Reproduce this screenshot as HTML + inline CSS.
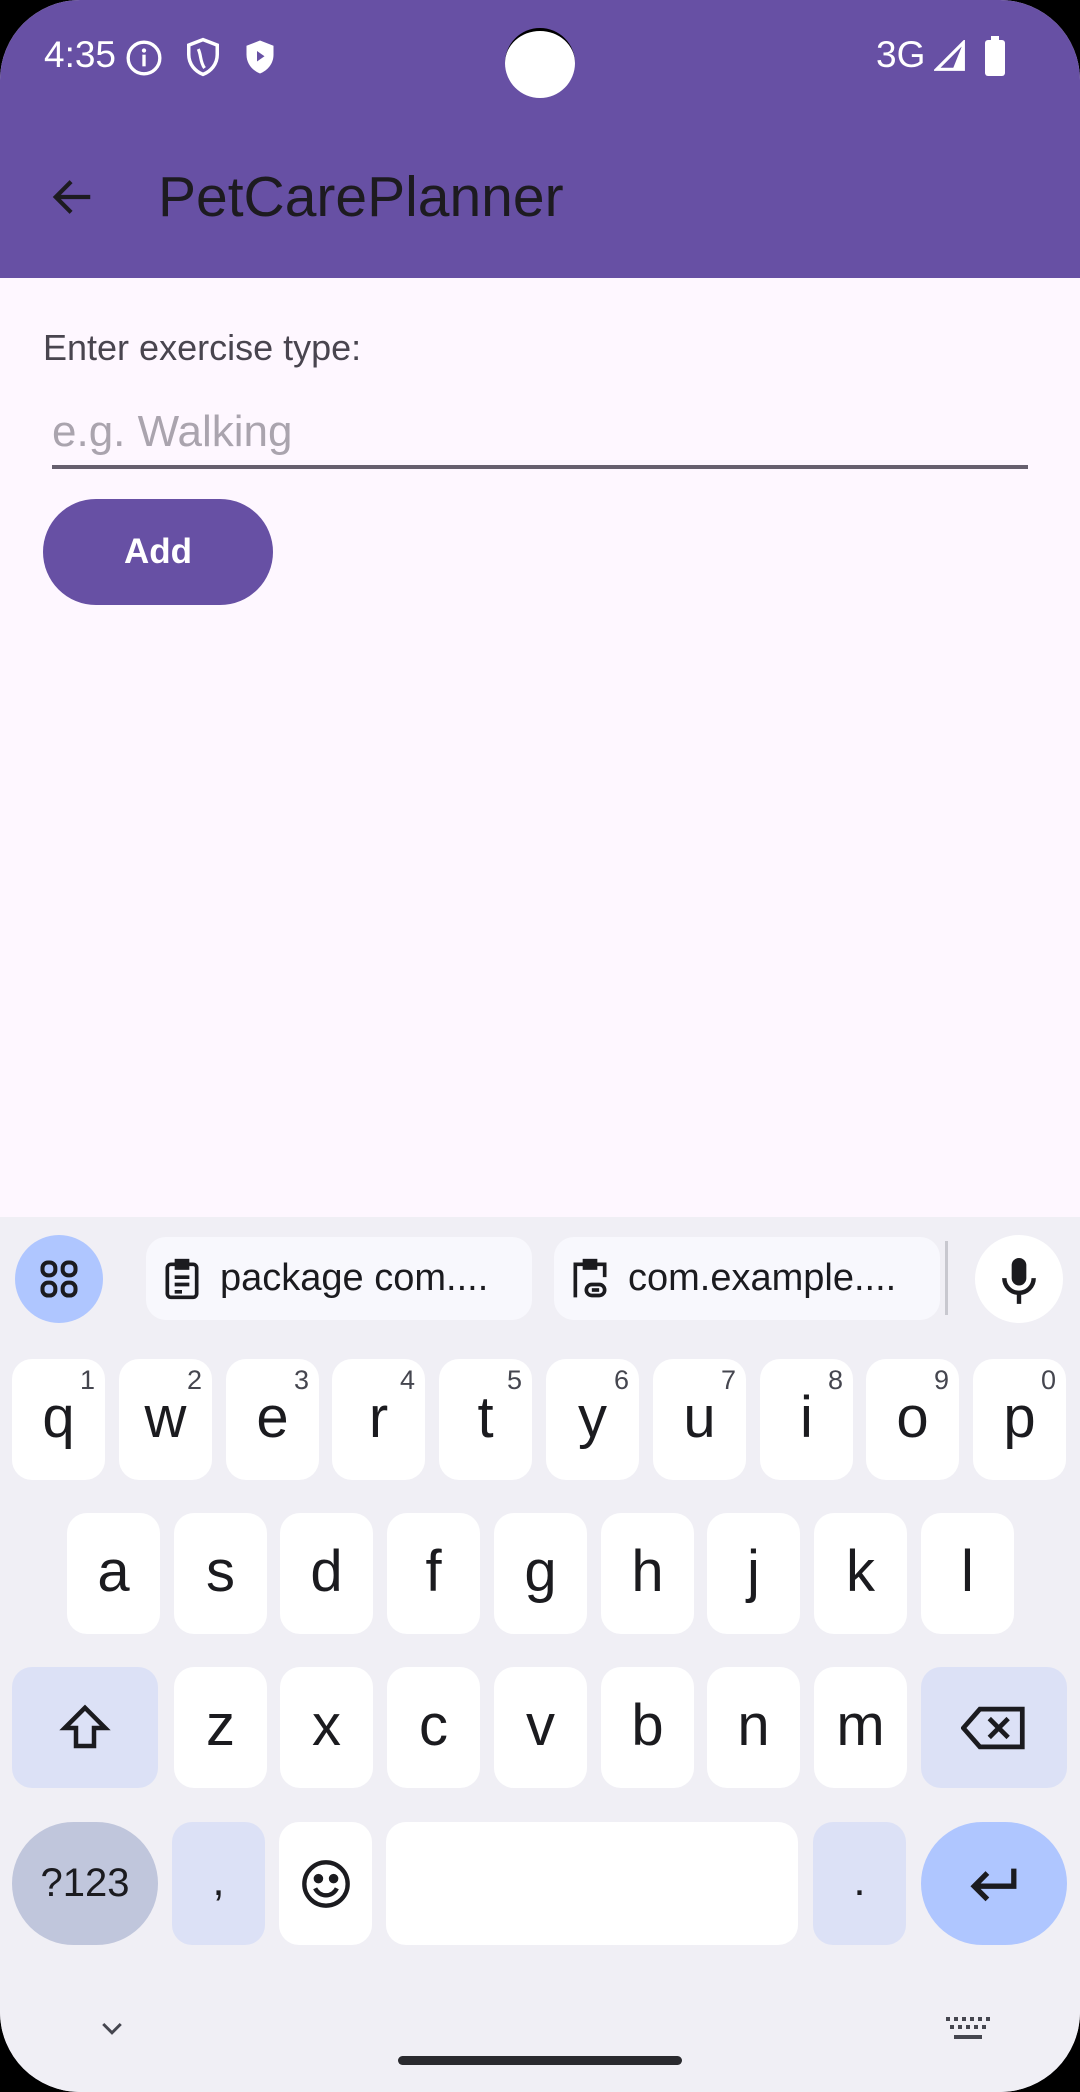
<!DOCTYPE html>
<html><head><meta charset="utf-8"><style>
*{margin:0;padding:0;box-sizing:border-box}
body{width:1080px;height:2092px;overflow:hidden;background:#000;font-family:"Liberation Sans",sans-serif}
#ph{position:absolute;left:0;top:0;width:1080px;height:2092px;background:#FEF7FF;border-radius:80px;overflow:hidden}
.a{position:absolute}
.k{position:absolute;width:93px;height:121px;background:#fff;border-radius:20px;color:#1b1b1f;font-size:58px;text-align:center;line-height:118px}
.k sup{position:absolute;right:10px;top:6px;font-size:27px;line-height:30px;color:#45464f}
.m{background:#DCE1F6}
</style></head><body><div id="ph">
<div class="a" style="left:0;top:0;width:1080px;height:278px;background:#6750A4"></div>
<div class="a" style="left:44px;top:34px;font-size:37px;color:#fff">4:35</div>
<svg class="a" style="left:124px;top:38px" width="40" height="40" viewBox="0 0 24 24"><circle cx="12" cy="12" r="9.5" fill="none" stroke="#fff" stroke-width="2"/><rect x="11" y="10" width="2" height="7" fill="#fff"/><circle cx="12" cy="7.5" r="1.3" fill="#fff"/></svg>
<svg class="a" style="left:184px;top:36px" width="38" height="42" viewBox="0 0 24 26"><path d="M12 2L3 5.5v6c0 6 4 10.5 9 12.5 5-2 9-6.5 9-12.5v-6z" fill="none" stroke="#fff" stroke-width="2.2"/><path d="M9 8c2 4 1 8 4 12" fill="none" stroke="#fff" stroke-width="2"/></svg>
<svg class="a" style="left:242px;top:36px" width="36" height="42" viewBox="0 0 24 26"><path d="M12 2L3 5.5v6c0 6 4 10.5 9 12.5 5-2 9-6.5 9-12.5v-6z" fill="#fff"/><path d="M10 9v7l5-3.5z" fill="#6750A4"/></svg>
<div class="a" style="left:505px;top:28px;width:70px;height:70px;border-radius:50%;background:#fff;border-top:3px solid #000"></div>
<div class="a" style="left:876px;top:34px;font-size:37px;color:#fff">3G</div>
<svg class="a" style="left:934px;top:40px" width="32" height="32" viewBox="0 0 24 24"><path d="M22 2L2 22h20z" fill="none" stroke="#fff" stroke-width="2.4"/><path d="M22 2v20h-8z" fill="#fff"/></svg>
<svg class="a" style="left:984px;top:36px" width="22" height="40" viewBox="0 0 11 20"><rect x="3.5" y="0" width="4" height="2" fill="#fff"/><rect x="0.5" y="2" width="10" height="18" rx="1.5" fill="#fff"/></svg>
<svg class="a" style="left:50px;top:174px" width="46" height="46" viewBox="0 0 24 24"><path d="M21 12H4M11 4l-8 8 8 8" fill="none" stroke="#1d1b20" stroke-width="2.2"/></svg>
<div class="a" style="left:158px;top:164px;font-size:57px;color:#1d1b20">PetCarePlanner</div>
<div class="a" style="left:43px;top:327px;font-size:36px;color:#49454f">Enter exercise type:</div>
<div class="a" style="left:52px;top:407px;font-size:44px;color:#aaa4ae">e.g. Walking</div>
<div class="a" style="left:52px;top:465px;width:976px;height:4px;background:#665f6e"></div>
<div class="a" style="left:43px;top:499px;width:230px;height:106px;border-radius:53px;background:#6750A4;color:#fff;font-size:35px;font-weight:bold;text-align:center;line-height:106px">Add</div>
<div class="a" style="left:0;top:1217px;width:1080px;height:875px;background:#F0EFF5"></div>
<div class="a" style="left:15px;top:1235px;width:88px;height:88px;border-radius:50%;background:#AFC6FF"></div>
<svg class="a" style="left:37px;top:1257px" width="44" height="44" viewBox="0 0 24 24" fill="none" stroke="#1b1b1f" stroke-width="2.2"><rect x="3" y="3" width="7" height="7" rx="3"/><rect x="14" y="3" width="7" height="7" rx="3"/><rect x="3" y="14" width="7" height="7" rx="3"/><rect x="14" y="14" width="7" height="7" rx="3"/></svg>
<div class="a" style="left:146px;top:1237px;width:386px;height:83px;border-radius:20px;background:#F8F8FD"></div>
<svg class="a" style="left:160px;top:1256px" width="44" height="46" viewBox="0 0 24 24" fill="none" stroke="#1b1b1f" stroke-width="2"><rect x="4" y="4" width="16" height="18" rx="2"/><rect x="9" y="2" width="6" height="4" fill="#1b1b1f"/><path d="M8 11h8M8 15h8M8 19h4"/></svg>
<div class="a" style="left:220px;top:1257px;font-size:38px;color:#1b1b1f">package com....</div>
<div class="a" style="left:554px;top:1237px;width:386px;height:83px;border-radius:20px;background:#F8F8FD"></div>
<svg class="a" style="left:568px;top:1256px" width="44" height="46" viewBox="0 0 24 24" fill="none" stroke="#1b1b1f" stroke-width="2"><path d="M4 22V4h16v7"/><rect x="9" y="2" width="6" height="4" fill="#1b1b1f"/><rect x="10" y="15" width="10" height="6" rx="3"/><path d="M13 18h4"/></svg>
<div class="a" style="left:628px;top:1257px;font-size:38px;color:#1b1b1f">com.example....</div>
<div class="a" style="left:945px;top:1241px;width:3px;height:74px;background:#c8c8cf"></div>
<div class="a" style="left:975px;top:1235px;width:88px;height:88px;border-radius:50%;background:#fff"></div>
<svg class="a" style="left:997px;top:1255px" width="44" height="50" viewBox="0 0 24 26"><rect x="8" y="1" width="8" height="15" rx="4" fill="#1b1b1f"/><path d="M4 12a8 8 0 0 0 16 0M12 20v6" fill="none" stroke="#1b1b1f" stroke-width="2.4"/></svg>

<div class="k" style="left:12px;top:1359px">q<sup>1</sup></div>
<div class="k" style="left:119px;top:1359px">w<sup>2</sup></div>
<div class="k" style="left:226px;top:1359px">e<sup>3</sup></div>
<div class="k" style="left:332px;top:1359px">r<sup>4</sup></div>
<div class="k" style="left:439px;top:1359px">t<sup>5</sup></div>
<div class="k" style="left:546px;top:1359px">y<sup>6</sup></div>
<div class="k" style="left:653px;top:1359px">u<sup>7</sup></div>
<div class="k" style="left:760px;top:1359px">i<sup>8</sup></div>
<div class="k" style="left:866px;top:1359px">o<sup>9</sup></div>
<div class="k" style="left:973px;top:1359px">p<sup>0</sup></div>

<div class="k" style="left:67px;top:1513px">a</div>
<div class="k" style="left:174px;top:1513px">s</div>
<div class="k" style="left:280px;top:1513px">d</div>
<div class="k" style="left:387px;top:1513px">f</div>
<div class="k" style="left:494px;top:1513px">g</div>
<div class="k" style="left:601px;top:1513px">h</div>
<div class="k" style="left:707px;top:1513px">j</div>
<div class="k" style="left:814px;top:1513px">k</div>
<div class="k" style="left:921px;top:1513px">l</div>

<div class="k m" style="left:12px;top:1667px;width:146px"><svg style="margin-top:34px" width="54" height="54" viewBox="0 0 24 24"><path d="M12 3L3 12h5v8h8v-8h5z" fill="none" stroke="#1b1b1f" stroke-width="2"/></svg></div>
<div class="k" style="left:174px;top:1667px">z</div>
<div class="k" style="left:280px;top:1667px">x</div>
<div class="k" style="left:387px;top:1667px">c</div>
<div class="k" style="left:494px;top:1667px">v</div>
<div class="k" style="left:601px;top:1667px">b</div>
<div class="k" style="left:707px;top:1667px">n</div>
<div class="k" style="left:814px;top:1667px">m</div>
<div class="k m" style="left:921px;top:1667px;width:146px"><svg style="margin-top:36px" width="66" height="50" viewBox="0 0 28 20"><path d="M8 2h18v16H8L1 10z" fill="none" stroke="#1b1b1f" stroke-width="2"/><path d="M12 6l8 8M20 6l-8 8" stroke="#1b1b1f" stroke-width="2"/></svg></div>

<div class="k" style="left:12px;top:1822px;width:146px;height:123px;border-radius:62px;background:#C0C6DC;font-size:40px;line-height:123px">?123</div>
<div class="k m" style="left:172px;top:1822px;height:123px;font-size:44px">,</div>
<div class="k" style="left:279px;top:1822px;height:123px"><svg style="margin-top:36px" width="52" height="52" viewBox="0 0 24 24" fill="none" stroke="#1b1b1f" stroke-width="2"><circle cx="12" cy="12" r="10"/><circle cx="8.5" cy="9.5" r="1.2" fill="#1b1b1f"/><circle cx="15.5" cy="9.5" r="1.2" fill="#1b1b1f"/><path d="M7 14a5.5 5.5 0 0 0 10 0"/></svg></div>
<div class="k" style="left:386px;top:1822px;width:412px;height:123px"></div>
<div class="k m" style="left:813px;top:1822px;height:123px;font-size:44px">.</div>
<div class="k" style="left:921px;top:1822px;width:146px;height:123px;border-radius:62px;background:#AFC6FF"><svg style="margin-top:40px" width="56" height="44" viewBox="0 0 24 20"><path d="M21 3v8H4M9 5l-6 6 6 6" fill="none" stroke="#1b1b1f" stroke-width="2.4"/></svg></div>

<svg class="a" style="left:96px;top:2014px" width="32" height="30" viewBox="0 0 24 24"><path d="M5 8l7 7 7-7" fill="none" stroke="#45464f" stroke-width="2.4"/></svg>
<svg class="a" style="left:946px;top:2016px" width="44" height="30" viewBox="0 0 22 14" fill="#45464f"><rect x="0" y="0" width="2" height="2"/><rect x="4" y="0" width="2" height="2"/><rect x="8" y="0" width="2" height="2"/><rect x="12" y="0" width="2" height="2"/><rect x="16" y="0" width="2" height="2"/><rect x="20" y="0" width="2" height="2"/><rect x="2" y="4" width="2" height="2"/><rect x="6" y="4" width="2" height="2"/><rect x="10" y="4" width="2" height="2"/><rect x="14" y="4" width="2" height="2"/><rect x="18" y="4" width="2" height="2"/><rect x="4" y="9" width="14" height="2"/></svg>
<div class="a" style="left:398px;top:2056px;width:284px;height:9px;border-radius:5px;background:#2a2a2e"></div>
</div></body></html>
